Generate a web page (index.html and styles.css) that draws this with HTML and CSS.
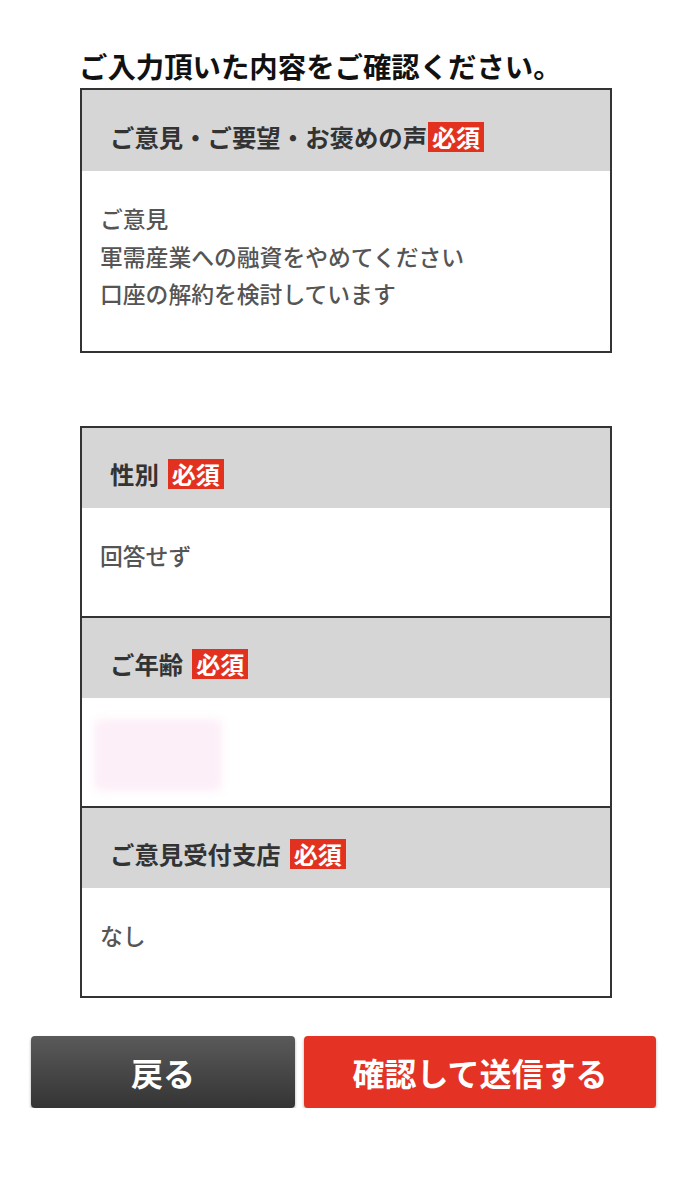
FILE: index.html
```html
<!DOCTYPE html>
<html lang="ja">
<head>
<meta charset="utf-8">
<title>ご入力内容の確認</title>
<link rel="stylesheet" href="styles.css">
</head>
<body>
<main class="page">
  <div class="content">
    <h1 class="title">ご入力頂いた内容をご確認ください。</h1>

    <section class="box box-first">
      <div class="item">
        <div class="item-head"><span class="label">ご意見・ご要望・お褒めの声</span><span class="badge badge-tight">必須</span></div>
        <div class="item-body item-body-tall">
          <p class="line">ご意見</p>
          <p class="line">軍需産業への融資をやめてください</p>
          <p class="line">口座の解約を検討しています</p>
        </div>
      </div>
    </section>

    <section class="box box-second">
      <div class="item">
        <div class="item-head"><span class="label">性別</span><span class="badge">必須</span></div>
        <div class="item-body"><p class="line">回答せず</p></div>
      </div>
      <div class="item item-sep">
        <div class="item-head"><span class="label">ご年齢</span><span class="badge">必須</span></div>
        <div class="item-body"><div class="redacted"></div></div>
      </div>
      <div class="item item-sep">
        <div class="item-head"><span class="label">ご意見受付支店</span><span class="badge">必須</span></div>
        <div class="item-body"><p class="line">なし</p></div>
      </div>
    </section>
  </div>

  <div class="actions">
    <button class="btn btn-back" type="button">戻る</button>
    <button class="btn btn-submit" type="button">確認して送信する</button>
  </div>
</main>
</body>
</html>
```

FILE: styles.css
```css
* {
  box-sizing: border-box;
}

html, body {
  margin: 0;
  padding: 0;
  background: #ffffff;
}

body {
  font-family: "Noto Sans CJK JP", "Noto Sans", sans-serif;
  color: #333333;
}

.page {
  width: 688px;
  padding-top: 48px;
}

.content {
  margin-left: 80px;
  width: 532px;
}

.title {
  margin: 0 0 4px -1px;
  font-size: 28.4px;
  line-height: 36px;
  font-weight: 700;
  color: #111111;
  white-space: nowrap;
  letter-spacing: 0;
}

.box {
  border: 2px solid #333333;
  background: #ffffff;
}

.box-second {
  margin-top: 73px;
}

.item-sep {
  border-top: 2px solid #333333;
}

.item-head {
  height: 80px;
  background: #d6d6d6;
  display: flex;
  align-items: center;
  padding: 12px 0 0 28px;
}

.box-first .item-head {
  height: 81px;
}

.label {
  font-size: 24.4px;
  line-height: 28px;
  font-weight: 700;
  color: #333333;
}

.badge {
  margin-left: 9px;
  background: #e2321f;
  color: #ffffff;
  font-size: 24px;
  line-height: 30px;
  font-weight: 700;
  padding: 0 4px;
}

.badge-tight {
  margin-left: 1px;
}

.item-body {
  height: 108px;
  padding: 29px 18px 0;
}

.item-body-tall {
  height: 180px;
}

.line {
  margin: 0;
  font-size: 22.8px;
  line-height: 37.5px;
  font-weight: 500;
  color: #555555;
  white-space: nowrap;
}

.redacted {
  margin: -8px 0 0 -6px;
  width: 128px;
  height: 72px;
  background: #fdeff8;
  filter: blur(4px);
  border-radius: 6px;
}

.actions {
  margin-top: 38px;
  margin-left: 31px;
  width: 625px;
  display: flex;
  gap: 9px;
}

.btn {
  height: 72px;
  border: none;
  border-radius: 4px;
  font-family: "Noto Sans CJK JP", "Noto Sans", sans-serif;
  font-size: 32px;
  font-weight: 700;
  color: #ffffff;
  box-shadow: 0 2px 3px rgba(0, 0, 0, 0.35);
  padding: 0;
}

.btn-back {
  width: 264px;
  background: linear-gradient(#5a5a5a, #343434);
}

.btn-submit {
  width: 352px;
  background: #e43325;
}
```
